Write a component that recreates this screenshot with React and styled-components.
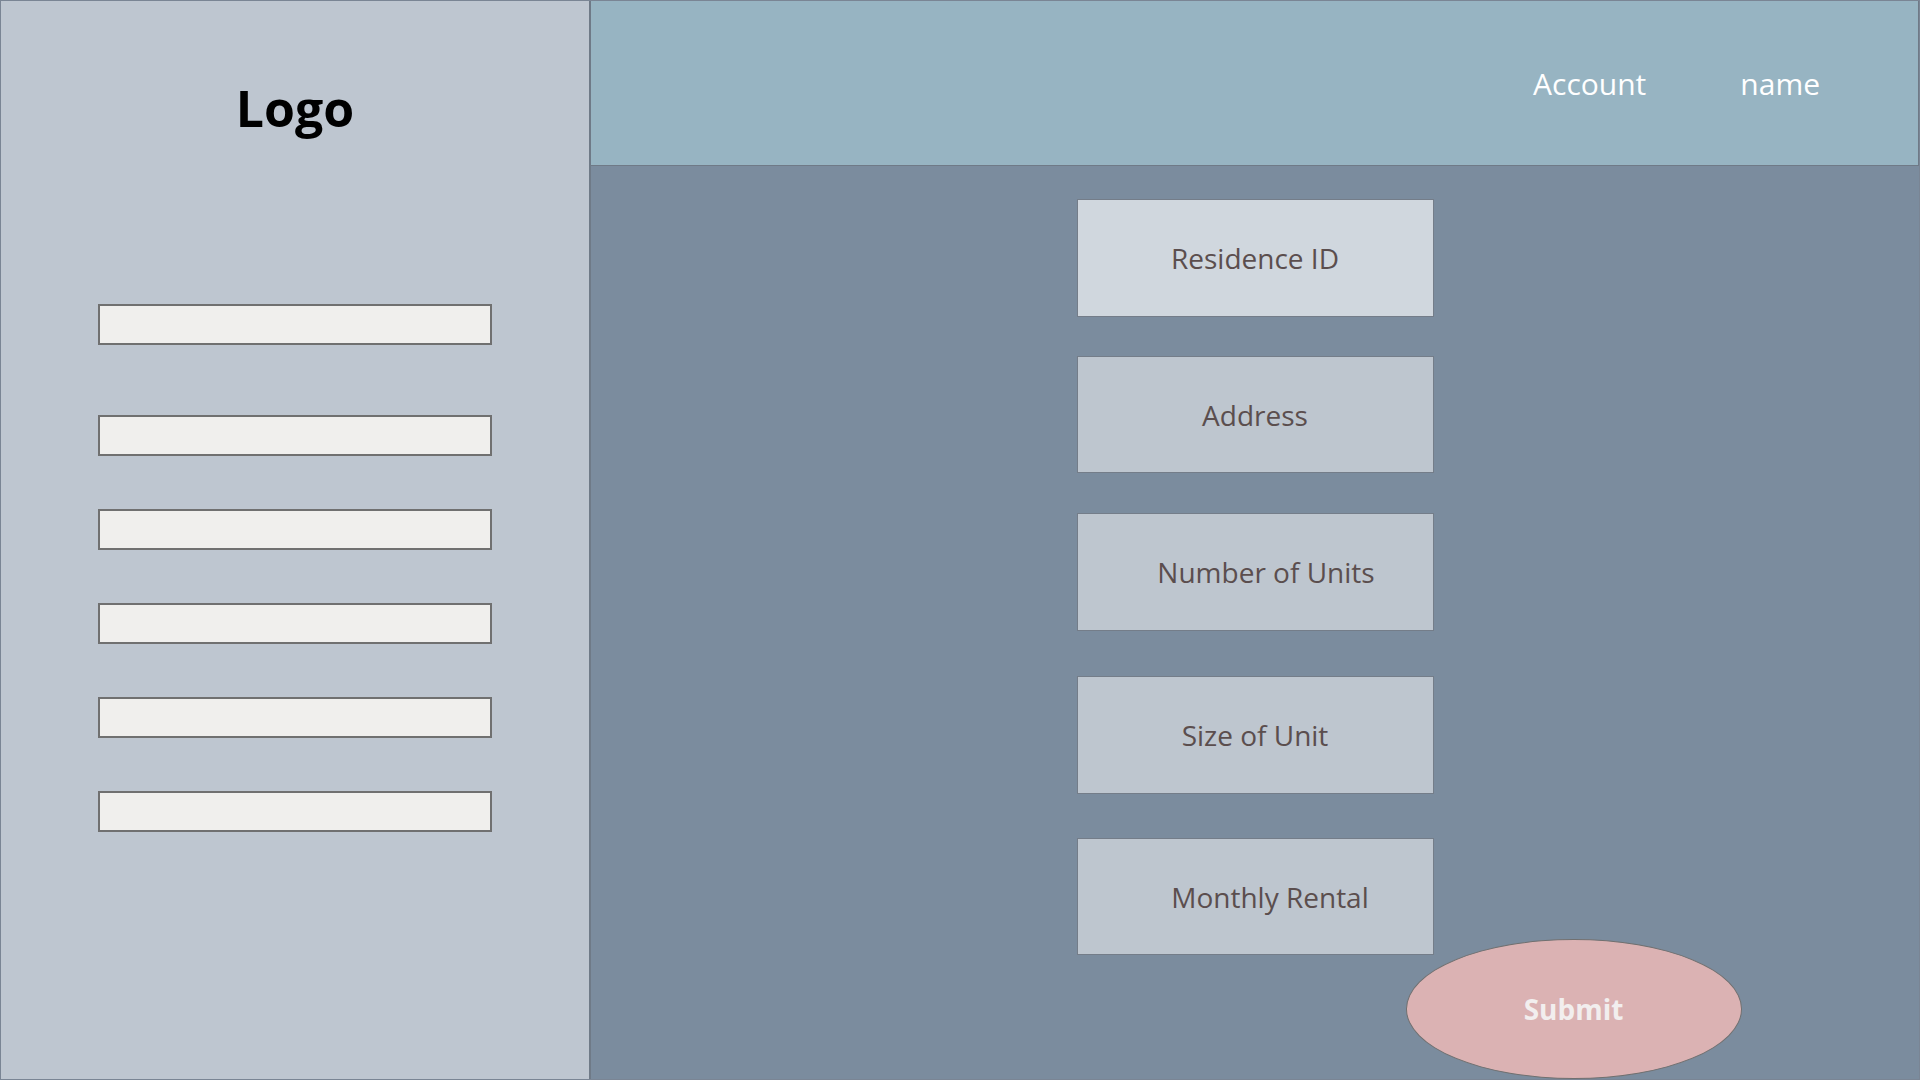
import React from 'react';
import styled, { createGlobalStyle } from 'styled-components';

const GlobalStyle = createGlobalStyle`
    *{
        box-sizing:border-box;
    }
    html,body{
        margin:0;
        padding:0;
    }
    body{
        font-family:"Open Sans","Noto Sans","Liberation Sans",sans-serif;
    }
`;

const Page = styled.div`
    display:grid;
    grid-template-columns:590px 1fr;
    grid-template-rows:165px 1fr;
    width:1920px;
    height:1080px;
    border:1px solid #7a8594;
    overflow:hidden;
`;

const Sidebar = styled.aside`
    grid-row:1 / span 2;
    display:flex;
    flex-direction:column;
    align-items:center;
    padding-top:82px;
    background:#bec6d0;
    border-right:2px solid #6f7a87;
`;

const Logo = styled.div`
    font-size:50px;
    font-weight:700;
    line-height:50px;
    color:#000;
    margin-bottom:171px;
`;

const NavSlot = styled.div`
    width:394px;
    height:41px;
    margin-top:${p => p.$gap}px;
    background:#f0efed;
    border:2px solid #707070;
`;

const Header = styled.header`
    display:flex;
    justify-content:flex-end;
    align-items:center;
    gap:94px;
    padding-right:98px;
    background:#97b4c2;
    border-bottom:1px solid #6f7a87;
    border-right:1px solid #6f7a87;
`;

const HeaderLink = styled.span`
    font-size:30px;
    color:#fff;
`;

const Main = styled.main`
    display:flex;
    justify-content:center;
    padding-top:33px;
    background:#7b8c9e;
    overflow:hidden;
`;

const FormColumn = styled.div`
    display:flex;
    flex-direction:column;
    width:357px;
`;

const Field = styled.div`
    display:flex;
    align-items:center;
    justify-content:center;
    height:118px;
    margin-top:${p => p.$gap}px;
    padding-left:${p => p.$shift * 2}px;
    background:${p => (p.$active ? '#d0d7de' : '#bec6cf')};
    border:1px solid #747d89;
    font-size:28px;
    color:#5b4e4e;
`;

const SubmitButton = styled.button`
    align-self:flex-start;
    width:336px;
    height:140px;
    margin-top:-16px;
    margin-left:329px;
    border-radius:50%;
    background:#dbb2b3;
    border:1px solid #707070;
    font-family:inherit;
    font-size:28px;
    font-weight:700;
    color:#f2eeee;
    cursor:pointer;
`;

const navGaps = [0, 70, 53, 53, 53, 53];

const fields = [
    { label: 'Residence ID', gap: 0, shift: 0, active: true },
    { label: 'Address', gap: 39, shift: 0 },
    { label: 'Number of Units', gap: 40, shift: 11 },
    { label: 'Size of Unit', gap: 45, shift: 0 },
    { label: 'Monthly Rental', gap: 44, shift: 15 },
];

export default function App() {
    return (
        <>
            <GlobalStyle />
            <Page>
                <Sidebar>
                    <Logo>Logo</Logo>
                    {navGaps.map((gap, i) => (
                        <NavSlot key={i} $gap={gap} />
                    ))}
                </Sidebar>
                <Header>
                    <HeaderLink>Account</HeaderLink>
                    <HeaderLink>name</HeaderLink>
                </Header>
                <Main>
                    <FormColumn>
                        {fields.map(f => (
                            <Field key={f.label} $gap={f.gap} $shift={f.shift} $active={f.active}>
                                {f.label}
                            </Field>
                        ))}
                        <SubmitButton>Submit</SubmitButton>
                    </FormColumn>
                </Main>
            </Page>
        </>
    );
}
